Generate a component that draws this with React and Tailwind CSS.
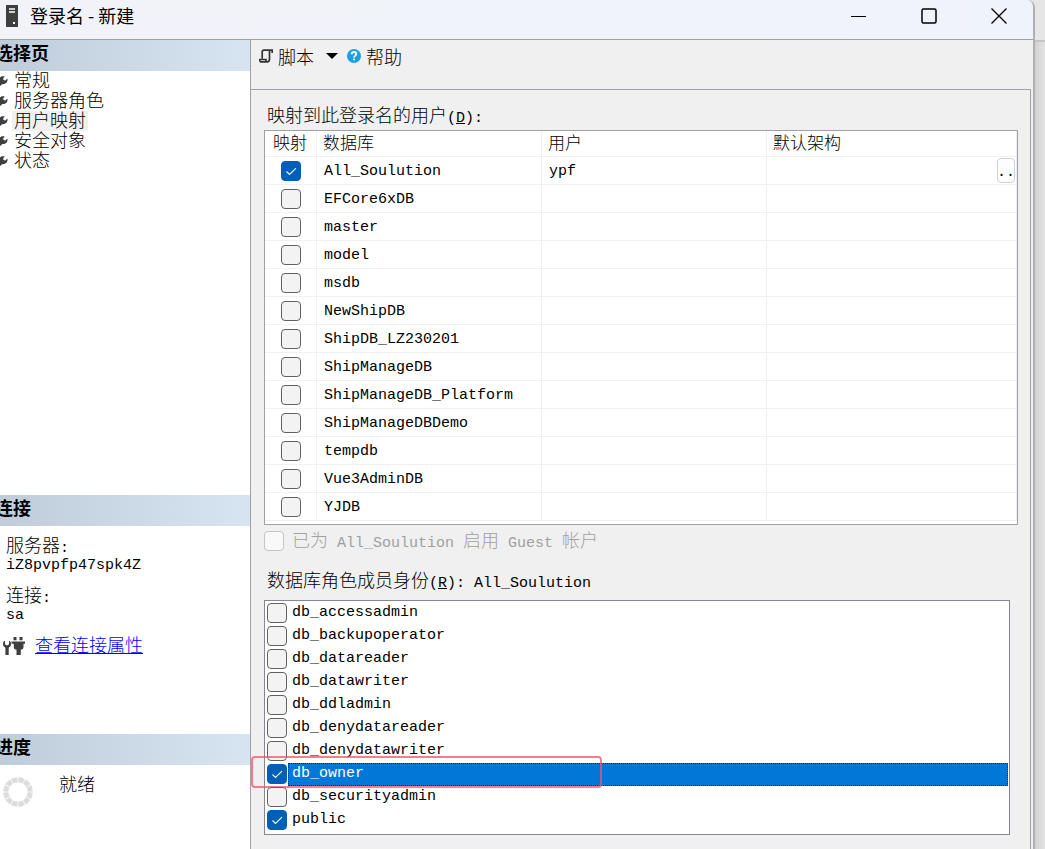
import clsx from 'clsx'
import { useState } from 'react'

const pages = ['常规', '服务器角色', '用户映射', '安全对象', '状态']

const initialDatabases = [
  { name: 'All_Soulution', user: 'ypf', mapped: true },
  { name: 'EFCore6xDB' },
  { name: 'master' },
  { name: 'model' },
  { name: 'msdb' },
  { name: 'NewShipDB' },
  { name: 'ShipDB_LZ230201' },
  { name: 'ShipManageDB' },
  { name: 'ShipManageDB_Platform' },
  { name: 'ShipManageDBDemo' },
  { name: 'tempdb' },
  { name: 'Vue3AdminDB' },
  { name: 'YJDB' },
]

const initialRoles = [
  { name: 'db_accessadmin' },
  { name: 'db_backupoperator' },
  { name: 'db_datareader' },
  { name: 'db_datawriter' },
  { name: 'db_ddladmin' },
  { name: 'db_denydatareader' },
  { name: 'db_denydatawriter' },
  { name: 'db_owner', member: true },
  { name: 'db_securityadmin' },
  { name: 'public', member: true },
]

// Latin text runs at half the width of a CJK character
const mono = "font-['Liberation_Mono',monospace] text-[15px] font-normal"

function ServerIcon() {
  return (
    <svg width="12" height="22" viewBox="0 0 12 22" className="shrink-0">
      <path d="M0 0h12v22H0z" fill="#3f3f3f" />
      <path d="M3 4h6M3 7h6" stroke="#fff" strokeWidth="1.6" />
      <path d="M7 17h2v2H7z" fill="#fff" />
    </svg>
  )
}

function WrenchIcon() {
  return (
    <svg width="8" height="10" viewBox="0 0 8 10" className="shrink-0">
      <path d="M0 1.500C1 .3 2.600-.1 4.800.5L3.200 2.200l.3 1.700 1.700.5L7.400 2.600c.5 2.600-.6 4.800-3.100 5.300-1 .2-1.700 0-2.300.4L.8 9.600 0 9.900z" fill="#3f3f3f" />
    </svg>
  )
}

function ScriptIcon() {
  return (
    <svg width="14" height="14" viewBox="0 0 14 14" fill="none" className="shrink-0">
      <path d="M13.200 4V1.200H5C3.600 1.200 3.200 1.800 3.200 3v6.500M10.500 1.500V10c0 2-.7 2.800-2.200 2.800H1.500C.8 12.800.8 11.500.8 10.500H7v2" stroke="#333" strokeWidth="1.700" />
    </svg>
  )
}

function HelpIcon() {
  return (
    <svg width="14" height="14" viewBox="0 0 14 14" fill="none" className="shrink-0">
      <circle cx="7" cy="7" r="7" fill="#1ba1e2" />
      <path d="M4.700 5.300c0-1.400.9-2.300 2.300-2.300s2.300.8 2.300 2.100c0 1.500-2.200 1.600-2.200 3.300" stroke="#fff" strokeWidth="1.800" />
      <path d="M6.100 9.500h1.900v1.800H6.100z" fill="#fff" />
    </svg>
  )
}

function PlugIcon() {
  return (
    <svg width="22" height="20" viewBox="0 0 22 20" fill="#3f3f3f" className="shrink-0">
      <path d="M0 8c0-1.800.7-2.800 2-3.200v3.400L4 9.600l2-1.400V4.800C7.300 5.200 8 6.200 8 8c0 1.800-.8 3-2.300 3.800V19H2.400v-7.200C.9 11 0 9.800 0 8z" />
      <path d="M10.500 1h3v3.200h-3zM16.500 1h3v3.200h-3zM8.500 5.500H22v2.300h-1.500V11c0 1.700-1 2.600-2.700 2.700V19h-4.300v-5.300c-1.800-.1-2.700-1-2.700-2.700V7.800H8.500z" />
    </svg>
  )
}

function Spinner() {
  return (
    <svg width="30" height="30" viewBox="0 0 30 30" fill="none" className="shrink-0">
      <circle cx="15" cy="15" r="12.200" stroke="#dcdcdc" strokeWidth="5.200" pathLength="120" strokeDasharray="8.600 1.400" strokeDashoffset="-0.700" />
    </svg>
  )
}

function CheckBox({ className, ...props }) {
  return (
    <span className={clsx('grid h-5 w-5 shrink-0', className)}>
      <input
        type="checkbox"
        className="peer [grid-area:1/1] h-5 w-5 appearance-none rounded border border-[#616161] bg-[#f3f3f3] checked:border-[#005fb8] checked:bg-[#005fb8] disabled:border-[#c4c4c4] disabled:bg-[#f9f9f9]"
        {...props}
      />
      <svg viewBox="0 0 20 20" fill="none" className="pointer-events-none invisible [grid-area:1/1] h-5 w-5 peer-checked:visible">
        <path d="M5.500 10.500 8.500 13.500 15 7.200" stroke="#fff" strokeWidth="1.100" />
      </svg>
    </span>
  )
}

function Mono({ children }) {
  return <span className={clsx(mono, 'leading-none whitespace-pre')}>{children}</span>
}

function SectionTitle({ children }) {
  return (
    <h2 className="flex h-[31px] shrink-0 items-center overflow-hidden bg-linear-to-r from-[#bfcddb] to-[#d7e4f2] pb-2 font-bold whitespace-nowrap text-black">
      <span className="-ml-[5px]">{children}</span>
    </h2>
  )
}

function TitleBar() {
  return (
    <header className="flex h-10 shrink-0 items-center border-b border-[#a0a0a0] bg-linear-to-r from-[#f2f3f9] to-[#eff3fb] pr-[26px] pb-2 pl-1.5">
      <ServerIcon />
      <h1 className="ml-3 flex-1 pb-0.5 font-normal">登录名 - 新建</h1>
      <div className="flex items-center gap-[54px]">
        <button type="button" aria-label="最小化">
          <svg width="16" height="16" viewBox="0 0 16 16" stroke="#000"><path d="M0 8.500h15" /></svg>
        </button>
        <button type="button" aria-label="最大化">
          <svg width="16" height="16" viewBox="0 0 16 16" fill="none" stroke="#000" strokeWidth="1.500"><rect x="1" y="1" width="14" height="14" rx="1.500" /></svg>
        </button>
        <button type="button" aria-label="关闭">
          <svg width="16" height="16" viewBox="0 0 16 16" stroke="#000" strokeWidth="1.300"><path d="m.5.5 15 15M15.500.5l-15 15" /></svg>
        </button>
      </div>
    </header>
  )
}

function Sidebar() {
  const [page, setPage] = useState('用户映射')

  return (
    <aside className="flex w-[251px] shrink-0 flex-col border-r border-[#a0a0a0] bg-white">
      <SectionTitle>选择页</SectionTitle>
      <ul className="flex-1">
        {pages.map((p) => (
          <li key={p} className="flex h-5 items-center gap-1">
            <WrenchIcon />
            <button
              type="button"
              onClick={() => setPage(p)}
              className={clsx('h-5 px-0.5 pb-1 leading-4', page === p && 'bg-[#f0f0f0]')}
            >
              {p}
            </button>
          </li>
        ))}
      </ul>

      <SectionTitle>连接</SectionTitle>
      <div className="px-1.5 pt-2.5 pb-[76px]">
        <dl>
          <dt className="h-5 leading-4">服务器<Mono>:</Mono></dt>
          <dd className={clsx(mono, 'mb-2.5 h-5 leading-5')}>iZ8pvpfp47spk4Z</dd>
          <dt className="h-5 leading-4">连接<Mono>:</Mono></dt>
          <dd className={clsx(mono, 'h-5 leading-5')}>sa</dd>
        </dl>
        <div className="-ml-[3px] mt-2 flex h-6 items-center gap-2.5">
          <PlugIcon />
          <a href="#properties" className="pb-1 leading-5 text-[#0000ff] underline">查看连接属性</a>
        </div>
      </div>

      <SectionTitle>进度</SectionTitle>
      <div className="flex h-[84px] items-start gap-[26px] pt-2 pl-[3px]">
        <div className="pt-1"><Spinner /></div>
        <span className="leading-5">就绪</span>
      </div>
    </aside>
  )
}

function Toolbar() {
  return (
    <div className="flex h-[49px] items-start pt-1 pl-2">
      <button type="button" className="flex items-center gap-[5px]">
        <ScriptIcon />
        脚本
        <svg width="12" height="6" viewBox="0 0 12 6" className="ml-[7px]"><path d="M0 0h12L6 6z" /></svg>
      </button>
      <button type="button" className="ml-[9px] flex items-center gap-[5px]">
        <HelpIcon />
        帮助
      </button>
    </div>
  )
}

function MappingTable() {
  const [rows, setRows] = useState(initialDatabases)
  const toggle = (name) => setRows(rows.map((r) => (r.name === name ? { ...r, mapped: !r.mapped } : r)))

  return (
    <div className="border border-[#a0a0a8] bg-white pb-[3px]">
      <table aria-labelledby="mapping-label" className="w-full table-fixed border-separate border-spacing-0 [&_td]:border-r [&_td]:border-b [&_td]:border-[#f0f0f0] [&_th]:border-r [&_th]:border-b [&_th]:border-[#f0f0f0]">
        <thead>
          <tr className="h-[26px] text-left text-[17px] leading-5 [&_th]:pb-1">
            <th className="w-[52px] pl-2 font-light">映射</th>
            <th className="w-[225px] pl-1.5 font-light">数据库</th>
            <th className="w-[225px] pl-1.5 font-light">用户</th>
            <th className="pl-1.5 font-light">默认架构</th>
          </tr>
        </thead>
        <tbody className={mono}>
          {rows.map((r) => (
            <tr key={r.name} className="h-7 leading-6">
              <td className="pl-4">
                <CheckBox aria-label={r.name} checked={!!r.mapped} onChange={() => toggle(r.name)} />
              </td>
              <td className="pt-0.5 pl-[7px]">{r.name}</td>
              <td className="pt-0.5 pl-[7px]">{r.user}</td>
              <td className="pr-px">
                {r.mapped && (
                  <button type="button" aria-label="选择默认架构" className="ml-auto flex h-[25px] w-[18px] items-center justify-center overflow-hidden rounded border border-[#d0d0d0] bg-[#fdfdfd] pt-1">
                    ..
                  </button>
                )}
              </td>
            </tr>
          ))}
        </tbody>
      </table>
    </div>
  )
}

function RoleList() {
  const [roles, setRoles] = useState(initialRoles)
  const toggle = (name) => setRoles(roles.map((r) => (r.name === name ? { ...r, member: !r.member } : r)))

  return (
    <ul aria-labelledby="role-label" className="mr-2 border border-[#828790] bg-white pt-px pr-px pb-0.5 pl-0.5">
      {roles.map((r) => {
        const selected = r.name === 'db_owner'
        return (
          <li key={r.name} className="relative h-[23px]">
            <label className="flex h-[23px] gap-px">
              <CheckBox className="mt-px" checked={!!r.member} onChange={() => toggle(r.name)} />
              <span
                className={clsx(
                  mono,
                  'flex-1 border border-dotted pl-[3px] leading-5',
                  selected ? 'border-[#402000] bg-[#0078d7] text-white' : 'border-transparent'
                )}
              >
                {r.name}
              </span>
            </label>
            {selected && (
              <div className="pointer-events-none absolute -top-[7px] -left-4 h-8 w-[351px] rounded border-2 border-[#ff5064]/75" />
            )}
          </li>
        )
      })}
    </ul>
  )
}

export default function App() {
  return (
    <div className="flex min-h-screen bg-[#e3e3e3] font-['Noto_Sans_CJK_SC',sans-serif] text-[18px] leading-6 font-light text-black">
      <div className="flex min-w-0 flex-1 flex-col overflow-hidden rounded-tr-lg border-r-2 border-[#b0b0b0] bg-[#f0f0f0]">
        <TitleBar />
        <div className="flex flex-1">
          <Sidebar />
          <div className="flex min-w-0 flex-1 flex-col">
            <Toolbar />
            <main className="mr-0.5 flex-1 border-t border-r border-[#a0a0a8] pt-3 pr-3 pl-[13px]">
              <p id="mapping-label" className="mb-1 h-6 pl-[3px]">
                映射到此登录名的用户<Mono>(<u>D</u>):</Mono>
              </p>
              <MappingTable />
              <label className="mt-1 flex h-6 items-center gap-2 text-[#a0a0a0]">
                <CheckBox disabled />
                <span className="pb-1">已为<Mono> All_Soulution </Mono>启用<Mono> Guest </Mono>帐户</span>
              </label>
              <p id="role-label" className="mt-3.5 mb-[9px] h-6 pl-[3px]">
                数据库角色成员身份<Mono>(<u>R</u>): All_Soulution</Mono>
              </p>
              <RoleList />
            </main>
          </div>
        </div>
      </div>
      <div className="w-2.5 shrink-0 bg-linear-to-r from-[#d2d2d2] to-[#e3e3e3]">
        <div className="h-[42px] border-b-2 border-[#c4c4c4] bg-[#e6e6e6]" />
      </div>
    </div>
  )
}
